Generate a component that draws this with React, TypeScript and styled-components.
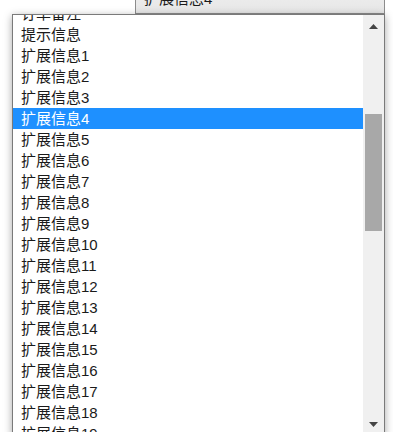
import React, { useLayoutEffect, useRef } from 'react';
import styled, { createGlobalStyle } from 'styled-components';

const GlobalStyle = createGlobalStyle`
  html, body {
    margin: 0;
    padding: 0;
    background: #ffffff;
    overflow: hidden;
  }
  body {
    font-family: "Liberation Sans", "Noto Sans CJK SC", sans-serif;
  }
`;

const Page = styled.div`
  width: 393px;
  height: 432px;
  display: flex;
  flex-direction: column;
  overflow: hidden;
`;

const TopBar = styled.div`
  height: 14px;
  display: flex;
  justify-content: flex-end;
  align-items: flex-end;
  padding-right: 8px;
  overflow: hidden;
  flex-shrink: 0;
`;

const SelectBox = styled.div`
  width: 250px;
  height: 32px;
  box-sizing: border-box;
  border: 1px solid #8c8c8c;
  border-top: none;
  background: linear-gradient(#f2f2f2, #e6e6e6);
  display: flex;
  align-items: center;
  justify-content: space-between;
  padding: 0 8px 0 8px;
  font-size: 15px;
  color: #1a1a1a;
`;

const Caret = styled.svg`
  width: 9px;
  height: 5px;
  fill: #444;
`;

const ListBox = styled.div`
  margin-left: 12px;
  width: 373px;
  height: 422px;
  box-sizing: border-box;
  border: 1px solid #7a7a7a;
  background: #fff;
  display: flex;
  box-shadow: 0 2px 8px rgba(0, 0, 0, 0.35);
  flex-shrink: 0;
`;

const Viewport = styled.div`
  flex: 1;
  overflow: hidden;
`;

const Option = styled.div<{ $selected?: boolean }>`
  height: 21px;
  line-height: 21px;
  padding-left: 8px;
  font-size: 15px;
  white-space: nowrap;
  color: ${p => (p.$selected ? '#ffffff' : '#1a1a1a')};
  background: ${p => (p.$selected ? '#1e90ff' : 'transparent')};
`;

const ScrollBar = styled.div`
  width: 21px;
  background: #f0f0f0;
  display: flex;
  flex-direction: column;
  flex-shrink: 0;
`;

const ArrowButton = styled.div`
  height: 22px;
  display: flex;
  align-items: center;
  justify-content: center;
  flex-shrink: 0;
`;

const Track = styled.div`
  flex: 1;
  position: relative;
`;

const Thumb = styled.div`
  position: absolute;
  left: 2px;
  right: 2px;
  background: #a8a8a8;
`;

const above = [
  '订单编号', '下单时间', '付款时间', '收货人', '联系电话', '收货地址', '商品名称',
  '商品编码', '数量', '单价', '实付金额', '物流公司', '物流单号',
];
const options = [
  ...above,
  '订单备注',
  '提示信息',
  ...Array.from({ length: 50 }, (_, i) => `扩展信息${i + 1}`),
];
const selected = '扩展信息4';
const ROW = 21;
const SCROLL = above.length * ROW + 12;

const App: React.FC = () => {
  const viewRef = useRef<HTMLDivElement>(null);

  useLayoutEffect(() => {
    if (viewRef.current) viewRef.current.scrollTop = SCROLL;
  }, []);

  return (
    <Page>
      <GlobalStyle />
      <TopBar>
        <SelectBox>
          <span>{selected}</span>
          <Caret viewBox="0 0 9 5">
            <polygon points="0,0 9,0 4.5,5" />
          </Caret>
        </SelectBox>
      </TopBar>
      <ListBox>
        <Viewport ref={viewRef}>
          {options.map(o => (
            <Option key={o} $selected={o === selected}>
              {o}
            </Option>
          ))}
        </Viewport>
        <ScrollBar>
          <ArrowButton>
            <Caret viewBox="0 0 9 5">
              <polygon points="4.5,0 9,5 0,5" />
            </Caret>
          </ArrowButton>
          <Track>
            <Thumb style={{ top: 77, height: 117 }} />
          </Track>
          <ArrowButton>
            <Caret viewBox="0 0 9 5">
              <polygon points="0,0 9,0 4.5,5" />
            </Caret>
          </ArrowButton>
        </ScrollBar>
      </ListBox>
    </Page>
  );
};

export default App;
